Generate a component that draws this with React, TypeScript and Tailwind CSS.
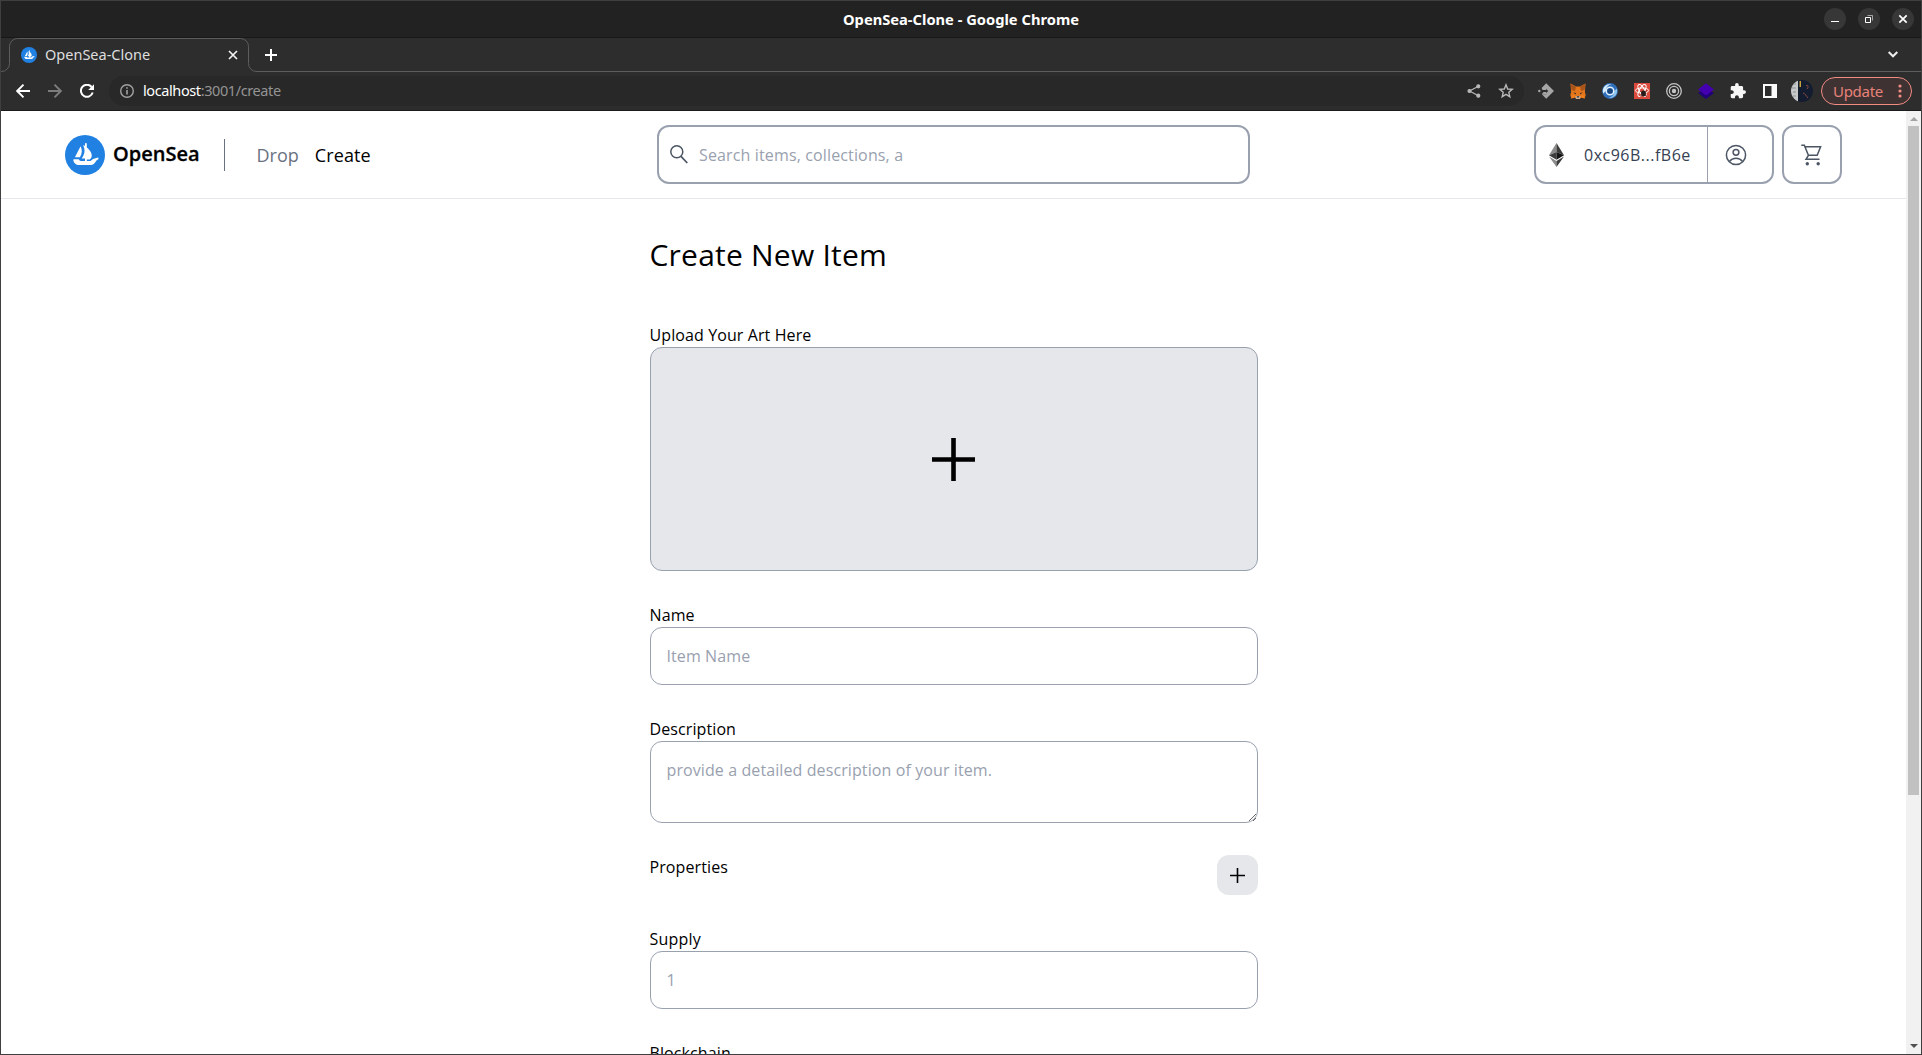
import React from "react";

function SailLogo({ size }: { size: number }) {
  return (
    <svg width={size} height={size} viewBox="0 0 40 40" className="shrink-0">
      <circle cx="20" cy="20" r="20" fill="#2081e2" />
      <path d="M15.6 11.3C17.4 14.6 17.2 19 14.9 22.2H9.9Z" fill="#fff" />
      <path
        d="M18 10.2c.8.1 1.5.5 2 .9V9.2c0-1.5 1.8-1.5 1.8 0v3.2c3.4 2.6 5.5 6.400 4.900 9-.3 1.300-1.200 2.200-2.100 3h-2.800v1.700h3.600c1-.5 1.900-1.700 2.600-2.100l5-1.500c.2 0 .4.2.4.4v1.300c-2.100 1-2.700 2.400-4 4.100-.9 1.200-1.900 1.700-3.200 1.700H14.300c-3.300 0-5.900-2.200-6-5.300 0-.2.1-.4.4-.4h4.600c1.300 0 1 1.800 2.500 1.800H20v-2.700h-3.300c3.400-4.500 3.600-9.200 1.300-13.200z"
        fill="#fff"
      />
    </svg>
  );
}

function WindowButton({ children }: { children: React.ReactNode }) {
  return (
    <button className="flex size-[22px] items-center justify-center rounded-full bg-[#373737]">
      <svg width="12" height="12" viewBox="0 0 12 12" fill="none" stroke="#fff">
        {children}
      </svg>
    </button>
  );
}

function TitleBar() {
  return (
    <div className="flex h-[37px] shrink-0 items-center border-b border-[#181818] bg-[#222222] pr-[7px]">
      <div className="w-[90px]" />
      <div className="flex-1 pl-[7px] text-center font-['Noto_Sans',sans-serif] text-[14.7px] leading-5 font-bold text-white">
        OpenSea-Clone - Google Chrome
      </div>
      <div className="flex gap-3">
        <WindowButton>
          <path d="M2 8.500h8" />
        </WindowButton>
        <WindowButton>
          <path d="M2.500 4.500h5v5h-5z" />
          <path d="M4.500 2.500h5v5" strokeOpacity=".55" />
        </WindowButton>
        <WindowButton>
          <path d="M2.300 2.300l7.400 7.400M9.700 2.300l-7.400 7.400" strokeWidth="1.700" />
        </WindowButton>
      </div>
    </div>
  );
}

function TabStrip() {
  return (
    <div className="flex h-[34px] shrink-0 bg-[#2d2d2d]">
      <div className="relative flex w-[255px] items-center pr-[13px] pl-5">
        <svg className="absolute top-0 left-0" width="255" height="34" fill="none" stroke="#5d5d5d">
          <path d="M0 33.500a8 8 0 0 0 8.500-8V8.500a8 8 0 0 1 8-8H239.500a8 8 0 0 1 8 8v17a8 8 0 0 0 8 8" />
        </svg>
        <SailLogo size={16} />
        <span className="mb-0.5 ml-2 flex-1 font-['Noto_Sans',sans-serif] text-[14.500px] leading-5 text-[#dedede]">OpenSea-Clone</span>
        <svg className="mr-[5px]" width="10" height="10" viewBox="0 0 10 10" stroke="#f2f2f2" strokeWidth="1.700">
          <path d="M1 1l8 8M9 1L1 9" />
        </svg>
      </div>
      <div className="flex flex-1 items-center justify-between border-b border-[#5d5d5d] pr-[23px] pl-[9px]">
        <svg width="12" height="12" viewBox="0 0 12 12" stroke="#fff" strokeWidth="2">
          <path d="M6 0v12M0 6h12" />
        </svg>
        <svg width="10" height="7" viewBox="0 0 10 7" fill="none" stroke="#eee" strokeWidth="2">
          <path d="M.7 1l4.300 4.300L9.300 1" />
        </svg>
      </div>
    </div>
  );
}

function Extensions() {
  return (
    <div className="flex items-center gap-4">
      <svg width="16" height="16" viewBox="0 0 16 16">
        <path d="M8.200 .3L16 8l-7.800 7.700L3.800 11.300h4.500L11 8 8.300 4.900H3.600z" fill="#a5a5a5" />
        <path d="M3.600 4.900h5L12 8l-3.400 3.300H3.800L5.500 9H8V7H4.500z" fill="#a5a5a5" />
        <path d="M3.500 8h5" stroke="#2d2d2d" strokeWidth="1.600" />
        <path d="M8 6l2.300 2L8 10z" fill="#2d2d2d" />
        <circle cx="1.300" cy="8" r="1.200" fill="#a5a5a5" />
      </svg>
      <svg width="16" height="16" viewBox="0 0 16 16">
        <path d="M.5.5L6 3.500h4L15.500.5l-.6 8.500.8 3-1 3.500-3.200-1L10 15.700H6L4.500 14.500l-3.200 1-1-3.500.8-3z" fill="#e4761b" />
        <path d="M.5.5L6 3.500 5 8 1.500 7zM15.500.5L10 3.500 11 8l3.500-1z" fill="#a8541a" />
        <path d="M3 9.500l3 .5v1.600zM13 9.500l-3 .5v1.600z" fill="#37302b" />
        <path d="M1.300 15.500l3.200-1-1-3zM14.700 15.500l-3.200-1 1-3z" fill="#f6851b" />
        <path d="M5.500 13h5L10 15.700H6z" fill="#d5c2b5" />
        <path d="M6.700 13.300h2.600v1.200H6.700z" fill="#1c1917" />
      </svg>
      <svg width="16" height="16" viewBox="0 0 16 16" fill="none">
        <circle cx="8" cy="8" r="7.900" fill="#2f6fba" />
        <path d="M1.200 10.500C-.5 5 3.500.5 9.500 1 6 2 4 4 3.800 8z" fill="#d3eafa" />
        <path d="M14.800 5.500c1.700 5.500-2.300 10-8.300 9.500 3.500-1 5.500-3 5.700-7z" fill="#8cc3ef" />
        <circle cx="8" cy="8" r="3.800" stroke="#e2f2fd" strokeWidth="1.500" />
        <circle cx="8" cy="8" r="2.600" fill="#1d4478" />
      </svg>
      <svg width="16" height="16" viewBox="0 0 16 16" fill="none">
        <path d="M0 0h16v16H0z" fill="#db4a3d" />
        <g stroke="#fff" strokeWidth="1">
          <ellipse cx="8" cy="7.500" rx="6.600" ry="2.600" />
          <ellipse cx="8" cy="7.500" rx="6.600" ry="2.600" transform="rotate(60 8 7.500)" />
          <ellipse cx="8" cy="7.500" rx="6.600" ry="2.600" transform="rotate(120 8 7.500)" />
        </g>
        <ellipse cx="9.500" cy="10.500" rx="2.400" ry="2.900" fill="#281b1a" />
        <path d="M6.500 8.500l6 4.500M12.500 8l-6 5" stroke="#281b1a" strokeWidth=".8" />
      </svg>
      <svg width="16" height="16" viewBox="0 0 16 16" fill="none" stroke="#c4c4c4" strokeWidth="1.300">
        <circle cx="8" cy="8" r="7.300" />
        <circle cx="8" cy="8" r="4.600" />
        <circle cx="8" cy="8" r="2.200" fill="#c4c4c4" stroke="none" />
      </svg>
      <svg width="16" height="16" viewBox="0 0 16 16">
        <path d="M0 10l8-5 8 5-8 5.900z" fill="#22007a" />
        <path d="M0 6.500L8 .3l8 6.200-8 6z" fill="#4400b0" />
      </svg>
      <svg width="16" height="16" viewBox="1 1 22 22" fill="#f7f7f7">
        <path d="M20.500 11H19V7c0-1.100-.9-2-2-2h-4V3.500a2.500 2.500 0 0 0-5 0V5H4c-1.100 0-1.990.9-1.990 2v3.800H3.500c1.490 0 2.700 1.210 2.700 2.700s-1.210 2.700-2.700 2.700H2V20c0 1.100.9 2 2 2h3.800v-1.500c0-1.490 1.210-2.700 2.700-2.700s2.700 1.210 2.700 2.700V22H17c1.100 0 2-.9 2-2v-4h1.500a2.500 2.500 0 0 0 0-5z" />
      </svg>
      <svg width="16" height="16" viewBox="0 0 16 16">
        <path fillRule="evenodd" d="M1 1h14v14H1zM3 3v10h6.500V3z" fill="#fafafa" />
      </svg>
    </div>
  );
}

function Toolbar() {
  return (
    <div className="flex h-[39px] shrink-0 items-center border-b border-[#1b1b1b] bg-[#2d2d2d] pr-[9px] pl-[15px]">
      <div className="flex gap-[18px]">
        <svg width="14" height="14" viewBox="0 0 14 14" fill="none" stroke="#fff" strokeWidth="1.900">
          <path d="M14 7H1.500M7.500.7L1.200 7l6.300 6.300" />
        </svg>
        <svg width="14" height="14" viewBox="0 0 14 14" fill="none" stroke="#7c7c7c" strokeWidth="1.900">
          <path d="M0 7h12.500M6.500.7L12.800 7l-6.300 6.300" />
        </svg>
        <svg width="14" height="14" viewBox="0 0 14 14" fill="none" stroke="#fff" strokeWidth="2">
          <path d="M12.700 8.500A6 6 0 1 1 11.600 3" />
          <path d="M14 .2V6H8.200z" fill="#fff" stroke="none" />
        </svg>
      </div>
      <div className="ml-[15px] flex h-[30px] flex-1 items-center rounded-full bg-[#282828] pr-[10px] pl-[11px]">
        <svg width="14" height="14" viewBox="0 0 14 14" fill="none" stroke="#a2a2a2" strokeWidth="1.400">
          <circle cx="7" cy="7" r="6.300" />
          <path d="M7 6v4.500M7 3.300v1.500" strokeWidth="1.600" />
        </svg>
        <span className="mb-0.5 ml-[9px] flex-1 font-['Noto_Sans',sans-serif] text-[14.500px] leading-5 tracking-[-0.4px] text-[#949494]">
          <span className="text-white">localhost</span>:3001/create
        </span>
        <svg className="mr-[17px]" width="14" height="14" viewBox="0 0 14 14" fill="#b8b8b8" stroke="#b8b8b8" strokeWidth="1.200">
          <path d="M11.500 2.300L2.500 7l9 4.700" fill="none" />
          <circle cx="11.300" cy="2.300" r="1.500" />
          <circle cx="2.500" cy="7" r="1.500" />
          <circle cx="11.300" cy="11.700" r="1.500" />
        </svg>
        <svg width="16" height="16" viewBox="0 0 16 16" fill="none" stroke="#b8b8b8" strokeWidth="1.400">
          <path d="M8 1.800l1.700 4.200 4.500.4-3.400 2.900 1 4.400L8 11.400l-3.800 2.300 1-4.400-3.400-2.900 4.500-.4z" />
        </svg>
      </div>
      <div className="ml-[14px]">
        <Extensions />
      </div>
      <svg className="ml-[13px]" width="22" height="22" viewBox="0 0 22 22">
        <clipPath id="avatar">
          <circle cx="11" cy="11" r="11" />
        </clipPath>
        <g clipPath="url(#avatar)">
          <path d="M0 0h22v22H0z" fill="#141c30" />
          <path d="M0 0h7v22H0z" fill="#c6c8ca" />
          <path d="M2 4h3M1 8h4M2 12h3M2 16h3" stroke="#8e9194" />
          <path d="M8.500 1h1.500v6H8.500z" fill="#c9a13b" />
          <path d="M15 6c2-2 3 1 1 3M12 13c2 0 3 3 5 5" stroke="#8a4b44" fill="none" />
        </g>
      </svg>
      <button className="ml-[8px] flex h-7 w-[91px] items-center justify-between rounded-full border border-[#f28b82] bg-[#3f3232] pr-[9px] pl-[11px] font-['Noto_Sans',sans-serif] text-[15px] leading-5 tracking-[-0.3px] text-[#e8827a]">
        Update
        <svg width="4" height="14" viewBox="0 0 4 14" fill="#f28b82">
          <circle cx="2" cy="2" r="1.600" />
          <circle cx="2" cy="7" r="1.600" />
          <circle cx="2" cy="12" r="1.600" />
        </svg>
      </button>
    </div>
  );
}

function EthereumMark() {
  return (
    <svg width="15" height="24" viewBox="0 0 15 24" className="shrink-0">
      <path d="M7.500 0v9L0 12.200z" fill="#8a8a8a" />
      <path d="M7.500 0v9l7.500 3.200z" fill="#3c3c3b" />
      <path d="M0 12.200L7.500 9v7.700z" fill="#3c3c3b" />
      <path d="M15 12.200L7.500 9v7.700z" fill="#141414" />
      <path d="M0 13.600l7.500 4.400v6z" fill="#8c8c8c" />
      <path d="M15 13.600L7.500 18v6z" fill="#3c3c3b" />
    </svg>
  );
}

function SiteHeader() {
  return (
    <header className="flex h-[88px] shrink-0 items-center border-b border-gray-200 px-16">
      <div className="flex flex-1 items-center">
        <SailLogo size={40} />
        <span className="mb-px ml-2 text-[20px] leading-7 font-semibold text-black [-webkit-text-stroke:0.3px_black]">OpenSea</span>
        <div className="ml-[24px] h-8 w-px bg-gray-500" />
        <nav className="ml-8 flex gap-4 text-[18px] leading-7">
          <a className="text-gray-500">Drop</a>
          <a className="tracking-[0.1px] text-black">Create</a>
        </nav>
      </div>
      <div className="flex h-[59px] w-[593px] items-center rounded-xl border-2 border-gray-400 pl-[11px]">
        <svg width="18" height="19" viewBox="0 0 18 19" fill="none" stroke="#4b5563" strokeWidth="1.500">
          <circle cx="6.800" cy="6.800" r="6" />
          <path d="M11 11.300l6.300 6.700" strokeWidth="1.700" />
        </svg>
        <input
          className="ml-[11px] flex-1 text-base tracking-[0.14px] outline-none placeholder:text-gray-400"
          placeholder="Search items, collections, a"
        />
      </div>
      <div className="flex flex-1 justify-end gap-2">
        <div className="flex h-[59px] w-[240px] rounded-xl border-2 border-gray-400 text-gray-700">
          <div className="flex w-[172px] items-center border-r border-gray-400 pl-[13px]">
            <EthereumMark />
            <span className="ml-5 text-base tracking-[0.5px]">0xc96B...fB6e</span>
          </div>
          <div className="flex items-center pl-[17px]">
            <svg width="22" height="22" viewBox="0 0 22 22" fill="none" stroke="#4b5563" strokeWidth="1.500">
              <circle cx="11" cy="11" r="9.600" />
              <circle cx="11" cy="8.300" r="2.900" />
              <path d="M4.300 17.600c1.800-2.300 4-3.300 6.700-3.300s4.900 1 6.700 3.300" />
            </svg>
          </div>
        </div>
        <div className="flex h-[59px] w-[60px] items-center rounded-xl border-2 border-gray-400 pl-[17px]">
          <svg width="21" height="22" viewBox="0 0 21 22" fill="none" stroke="#4b5563" strokeWidth="1.500">
            <path d="M.3 1.200h3L7.400 11.300h8.800L19.600 2.700H4M7.400 11.300L5 15.300h13.500" />
            <circle cx="6.300" cy="19.700" r="1.700" fill="#4b5563" stroke="none" />
            <circle cx="17.200" cy="19.700" r="1.700" fill="#4b5563" stroke="none" />
          </svg>
        </div>
      </div>
    </header>
  );
}

function PlusMark({ className, stroke }: { className: string; stroke: number }) {
  return (
    <svg className={className} viewBox="0 0 43 43" stroke="black" strokeWidth={stroke}>
      <path d="M21.500 0v43M0 21.500h43" />
    </svg>
  );
}

const field =
  "block w-full rounded-xl border border-gray-400 p-4 text-base leading-6 outline-none placeholder:text-gray-400";

function CreateForm() {
  return (
    <main className="mx-auto flex w-[608px] flex-col gap-8 pt-[38px]">
      <h1 className="mb-[18px] text-[30px] leading-9 tracking-[0.22px]">Create New Item</h1>
      <label className="block tracking-[0.1px]">
        Upload Your Art Here
        <div className="flex h-56 items-center justify-center rounded-xl border border-gray-400 bg-gray-200">
          <PlusMark className="size-[43px]" stroke={4.6} />
        </div>
      </label>
      <label className="block tracking-[0.1px]">
        Name
        <input className={field} placeholder="Item Name" />
      </label>
      <label className="block tracking-[0.1px]">
        Description
        <textarea className={field + " h-[82px] resize-y"} placeholder="provide a detailed description of your item." />
      </label>
      <div className="flex h-10 justify-between tracking-[0.1px]">
        Properties
        <button className="flex h-10 w-[41px] items-center justify-center rounded-xl bg-gray-200">
          <PlusMark className="size-[15px]" stroke={4.6} />
        </button>
      </div>
      <label className="block tracking-[0.2px]">
        Supply
        <input className={field} placeholder="1" />
      </label>
      <label className="block tracking-[0.1px]">Blockchain</label>
    </main>
  );
}

function Scrollbar() {
  return (
    <div className="flex w-[15px] shrink-0 flex-col items-center justify-between bg-[#f1f1f1] pt-[6px] pb-[6px]">
      <div className="flex flex-col items-center gap-[5px]">
        <svg width="8" height="4" viewBox="0 0 8 4" fill="#a3a3a3">
          <path d="M4 0l4 4H0z" />
        </svg>
        <div className="h-[669px] w-[11px] bg-[#c1c1c1]" />
      </div>
      <svg width="8" height="4" viewBox="0 0 8 4" fill="#505050">
        <path d="M0 0h8L4 4z" />
      </svg>
    </div>
  );
}

export default function App() {
  return (
    <div className="flex h-[1055px] w-[1922px] flex-col overflow-hidden border border-[#3f3f3f] bg-white font-['Open_Sans',sans-serif] text-base text-black">
      <TitleBar />
      <TabStrip />
      <Toolbar />
      <div className="flex min-h-0 flex-1">
        <div className="min-w-0 flex-1 overflow-hidden">
          <SiteHeader />
          <CreateForm />
        </div>
        <Scrollbar />
      </div>
    </div>
  );
}
